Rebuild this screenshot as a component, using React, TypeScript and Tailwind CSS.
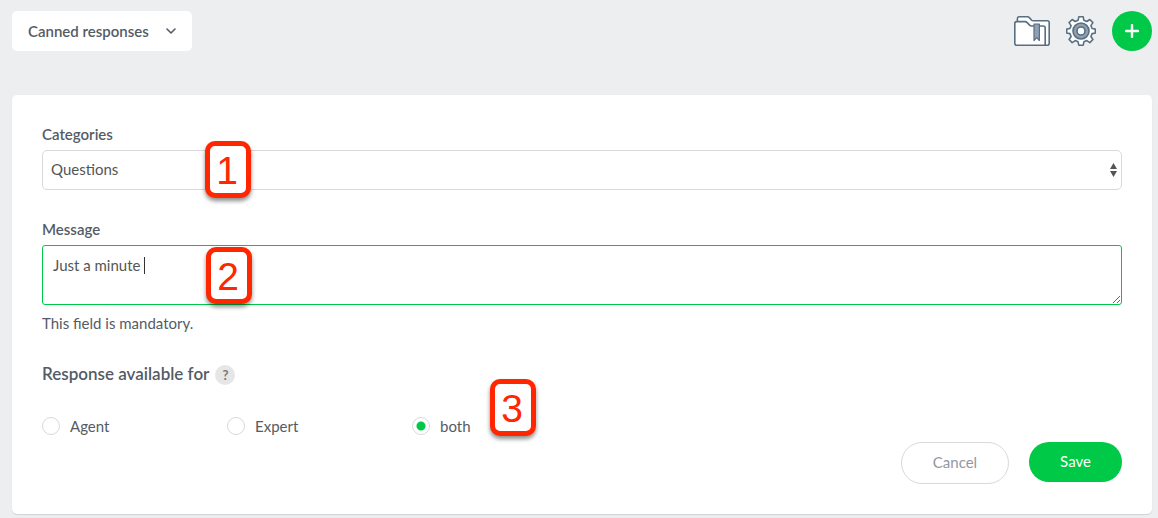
import { useState, type ReactNode } from "react";

const audiences = ["Agent", "Expert", "both"];

function FolderIcon() {
  return (
    <svg width="36" height="30" viewBox="0 0 36 30" fill="none" stroke="#586f82" strokeWidth="1.6" strokeLinejoin="round" aria-hidden="true">
      <path d="M3.4 6V2.8Q3.4.8 5.200.8h8.400q1 0 1.700.8l2.400 2.600q.6.6 1.500.6h14.200q1.800 0 1.800 1.700v20.700q0 2-2 2H3Z" fill="#fff" />
      <path d="M.8 7.400Q.8 5.600 2.500 5.600h8.700q1 0 1.700.8l3 3q.6.6 1.500.6h11.800q2 0 2 2v17.200H2.800q-2 0-2-2Z" fill="#fff" />
      <path d="M20 8h5.400v16.500l-2.700-2.800L20 24.500Z" fill="#8fa1b3" strokeWidth="1.200" />
    </svg>
  );
}

function GearIcon() {
  return (
    <svg width="30" height="30" viewBox="0 0 30 30" fill="none" stroke="#586f82" strokeWidth="1.6" strokeLinejoin="round" aria-hidden="true">
      <path
        d="M12.800.8h4.400l.7 3.500 2.900 1.200 3-2 3.100 3.100-2 3 1.200 2.900 3.200.6v3.900l-3.200.6-1.200 2.900 2 3-3.100 3.100-3-2-2.900 1.200-.7 3.400h-4.400l-.7-3.400-2.900-1.200-3 2-3.100-3.100 2-3-1.200-2.900-3.200-.6v-3.900l3.200-.6 1.200-2.900-2-3 3.100-3.100 3 2 2.900-1.200Z"
        fill="#fff"
      />
      <circle cx="15" cy="15" r="8" fill="#8fa1b3" />
      <circle cx="15" cy="15" r="4" fill="#fff" />
    </svg>
  );
}

function Marker({ className, children }: { className: string; children: ReactNode }) {
  return (
    <span
      className={`pointer-events-none absolute flex h-[57px] w-[46px] items-center justify-center rounded-[10px] border-[5px] border-[#ff2600] bg-white pt-0.5 pr-0.5 font-['Liberation_Sans',sans-serif] text-[39px] leading-none text-[#ff2600] shadow-[0_3px_4px_rgba(0,0,0,0.45)] ${className}`}
    >
      {children}
    </span>
  );
}

export default function App() {
  const [message, setMessage] = useState("Just a minute ");
  const [audience, setAudience] = useState("both");

  return (
    <div className="min-h-screen bg-[#edeef0] pt-[11px] pr-1.5 pb-1 pl-3 font-[Lato,sans-serif] text-[15px] leading-5 text-[#545b66]">
      <header className="flex items-center justify-between">
        <button type="button" className="flex h-10 w-[180px] items-center justify-between rounded-[5px] bg-white px-4 font-semibold">
          Canned responses
          <svg width="10" height="6" viewBox="0 0 10 6" fill="none" stroke="#545b66" strokeWidth="1.6" strokeLinecap="round" strokeLinejoin="round" aria-hidden="true">
            <path d="m1 1 4 4 4-4" />
          </svg>
        </button>
        <div className="flex items-center gap-4">
          <button type="button" aria-label="Categories folder">
            <FolderIcon />
          </button>
          <button type="button" aria-label="Settings">
            <GearIcon />
          </button>
          <button type="button" aria-label="Add response" className="flex size-10 items-center justify-center rounded-full bg-[#00c947]">
            <svg width="14" height="14" viewBox="0 0 14 14" stroke="#fff" strokeWidth="2.4" strokeLinecap="round" aria-hidden="true">
              <path d="M7 1v12M1 7h12" />
            </svg>
          </button>
        </div>
      </header>

      <form className="mt-11 rounded-[5px] bg-white px-[30px] pt-[29px] pb-[30px] shadow-[0_1px_1px_#d0d2d4]" onSubmit={(e) => e.preventDefault()}>
        <label htmlFor="category" className="block font-semibold">
          Categories
        </label>
        <div className="relative mt-1.5">
          <select id="category" className="block h-10 w-full appearance-none rounded-[5px] border border-[#d9d9d9] bg-white px-2 pb-0.5 text-[#555]">
            <option>Questions</option>
          </select>
          <svg className="pointer-events-none absolute top-[13px] right-[5px]" width="7" height="14" viewBox="0 0 7 14" fill="#555" aria-hidden="true">
            <path d="M3.500 0 7 6H0ZM3.500 14 0 8h7Z" />
          </svg>
          <Marker className="top-[-9px] left-[163px]">1</Marker>
        </div>

        <label htmlFor="message" className="mt-[29px] block font-semibold">
          Message
        </label>
        <div className="relative mt-1.5">
          <textarea
            id="message"
            value={message}
            onChange={(e) => setMessage(e.target.value)}
            className="block h-[60px] w-full resize-y rounded-[3px] border border-[#00c947] bg-white px-2.5 py-[9px] text-[#555] caret-transparent outline-none"
          />
          <div aria-hidden="true" className="pointer-events-none absolute top-2.5 left-[11px] flex h-5 items-center whitespace-pre">
            <span className="invisible">{message}</span>
            <span className="h-[17px] w-px bg-[#333]" />
          </div>
          <Marker className="top-0.5 left-[164px]">2</Marker>
        </div>
        <p className="mt-2">This field is mandatory.</p>

        <fieldset className="mt-[30px]">
          <legend className="flex items-center gap-1.5 text-[17px] font-semibold">
            Response available for
            <button type="button" aria-label="Help" className="mt-0.5 size-5 rounded-full bg-[#e6e6e6] text-[13px] leading-5 font-bold text-[#777]">
              ?
            </button>
          </legend>
          <div className="mt-[31px] flex">
            {audiences.map((name) => (
              <label key={name} className="relative flex w-[185px] items-center gap-2.5">
                <input
                  type="radio"
                  name="audience"
                  checked={audience === name}
                  onChange={() => setAudience(name)}
                  className="size-[18px] appearance-none rounded-full border border-[#d9d9d9] bg-white checked:bg-[radial-gradient(circle,#00c947_4px,transparent_5px)]"
                />
                {name}
                {name === "both" && <Marker className="top-[-37px] left-[78px]">3</Marker>}
              </label>
            ))}
          </div>
        </fieldset>

        <div className="mt-1.5 flex items-start justify-end gap-5">
          <button type="button" className="h-[42px] w-[108px] rounded-full border border-[#d9d9d9] pb-0.5 text-[#9297a3]">
            Cancel
          </button>
          <button type="submit" className="h-10 w-[93px] rounded-full bg-[#00c947] pb-0.5 text-white">
            Save
          </button>
        </div>
      </form>
    </div>
  );
}
